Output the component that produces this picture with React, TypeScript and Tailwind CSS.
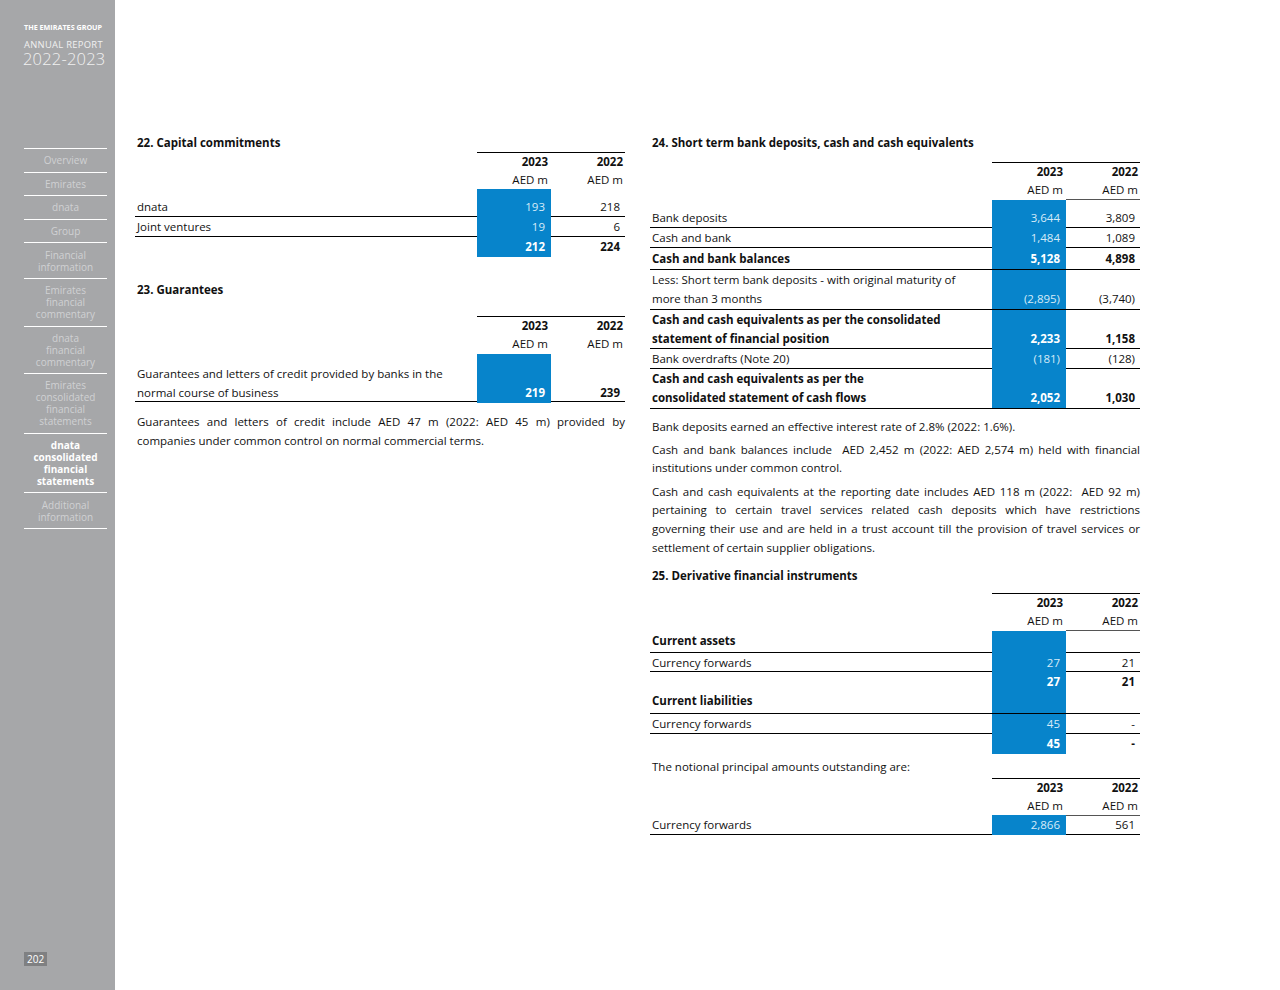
import type { ReactNode } from "react";

const BLUE = "bg-[#0784cb]";

type Row = {
  label?: ReactNode;
  a?: string;
  b?: string;
  h: number;
  bold?: boolean;
  line?: boolean;
  pb?: number;
};

function Head({ h, rule }: { h: number; rule?: boolean }) {
  return (
    <div className="grid grid-cols-[1fr_74px_74px]" style={{ height: h }}>
      <div />
      <div className="border-t border-black pr-[3px] text-right leading-[18px]">
        <div className="font-bold">2023</div>
        <div>AED m</div>
      </div>
      <div
        className={
          "border-t border-black pr-[2px] text-right leading-[18px]" +
          (rule ? " border-b border-b-[#555]" : "")
        }
      >
        <div className="font-bold">2022</div>
        <div>AED m</div>
      </div>
    </div>
  );
}

function Rows({ rows }: { rows: Row[] }) {
  return (
    <div>
      {rows.map((r, i) => {
        const pb = r.pb ?? 1;
        return (
          <div
            key={i}
            className={
              "grid grid-cols-[1fr_74px_74px] items-end leading-[19px]" +
              (r.line ? " border-b border-black" : "") +
              (r.bold ? " font-bold" : "")
            }
            style={{ height: r.h, paddingBottom: pb }}
          >
            <div className="pl-[2px]">{r.label}</div>
            <div
              className={`${BLUE} flex items-end justify-end pr-[6px] ${
                r.bold ? "text-white" : "text-[#d6ebf8]"
              }`}
              style={{ marginBottom: -pb, height: `calc(100% + ${pb}px)`, paddingBottom: pb }}
            >
              {r.a}
            </div>
            <div className="pr-[5px] text-right">{r.b}</div>
          </div>
        );
      })}
    </div>
  );
}

function Spacer({ h }: { h: number }) {
  return (
    <div className="grid grid-cols-[1fr_74px_74px]" style={{ height: h }}>
      <div />
      <div className={BLUE} />
      <div />
    </div>
  );
}

// justified paragraph broken at the same places as the printed page
function Para({ lines, className = "" }: { lines: string[]; className?: string }) {
  return (
    <div className={className}>
      {lines.map((l, i) => (
        <div key={i} className={i < lines.length - 1 ? "text-justify [text-align-last:justify]" : ""}>
          {l}
        </div>
      ))}
    </div>
  );
}

const nav: { t: string[]; active?: boolean }[] = [
  { t: ["Overview"] },
  { t: ["Emirates"] },
  { t: ["dnata"] },
  { t: ["Group"] },
  { t: ["Financial", "information"] },
  { t: ["Emirates", "financial", "commentary"] },
  { t: ["dnata", "financial", "commentary"] },
  { t: ["Emirates", "consolidated", "financial", "statements"] },
  { t: ["dnata", "consolidated", "financial", "statements"], active: true },
  { t: ["Additional", "information"] },
];

function Sidebar() {
  return (
    <aside className="relative flex h-[990px] w-[115px] shrink-0 flex-col bg-[#a6a7a9] pl-[24px] pr-[8px] text-white">
      <div className="whitespace-nowrap pt-[22px] text-[7.2px] font-bold leading-[10px]">THE EMIRATES GROUP</div>
      <div className="mt-[6.5px] whitespace-nowrap text-[9.4px] leading-[11px] tracking-[0.3px] text-[#f1f1f1]">
        ANNUAL REPORT
      </div>
      <div className="-ml-[1px] whitespace-nowrap text-[16.5px] font-light leading-[17px] tracking-[0.2px] text-[#f1f1f1]">
        2022-2023
      </div>
      <nav className="mt-[81.5px] border-t border-white">
        {nav.map((n, i) => (
          <div
            key={i}
            className={
              "border-b border-white py-[5.3px] text-center text-[10px] leading-[12px] " +
              (n.active ? "font-bold text-white" : "text-[#d0d1d3]")
            }
          >
            {n.t.map((l, j) => (
              <div key={j}>{l}</div>
            ))}
          </div>
        ))}
      </nav>
      <div className="absolute left-[24px] top-[952px] bg-[#7f8082] px-[3px] text-[10px] leading-[14px] text-white">202</div>
    </aside>
  );
}

function Title({ children, className = "" }: { children: ReactNode; className?: string }) {
  return <h2 className={"pl-[2px] font-bold leading-[18px] " + className}>{children}</h2>;
}

export default function App() {
  return (
    <div
      className="flex min-h-[990px] w-[1280px] bg-white text-[11.5px] text-[#111]"
      style={{ fontFamily: '"Open Sans", "Noto Sans", sans-serif' }}
    >
      <Sidebar />
      <main className="flex gap-[25px] pl-[20px] pt-[134px]">
        {/* left column */}
        <section className="w-[490px]">
          <Title>22. Capital commitments</Title>
          <Head h={37} />
          <Spacer h={8} />
          <Rows
            rows={[
              { label: "dnata", a: "193", b: "218", h: 20, line: true },
              { label: "Joint ventures", a: "19", b: "6", h: 20, line: true },
              { a: "212", b: "224", h: 20, bold: true },
            ]}
          />
          <Title className="mt-[24px]">23. Guarantees</Title>
          <div className="mt-[17px]">
            <Head h={38} />
            <Spacer h={10} />
            <Rows
              rows={[
                {
                  label: (
                    <span className="font-normal">
                      Guarantees and letters of credit provided by banks in the
                      <br />
                      normal course of business
                    </span>
                  ),
                  a: "219",
                  b: "239",
                  h: 38,
                  bold: true,
                  line: true,
                },
              ]}
            />
          </div>
          <Para
            className="mt-[11px] pl-[2px] leading-[18.5px]"
            lines={[
              "Guarantees and letters of credit include AED 47 m (2022: AED 45 m) provided by",
              "companies under common control on normal commercial terms.",
            ]}
          />
        </section>

        {/* right column */}
        <section className="w-[490px]">
          <Title>24. Short term bank deposits, cash and cash equivalents</Title>
          <div className="mt-[10px]">
            <Head h={38} rule />
            <Spacer h={8} />
            <Rows
              rows={[
                { label: "Bank deposits", a: "3,644", b: "3,809", h: 20, line: true },
                { label: "Cash and bank", a: "1,484", b: "1,089", h: 20, line: true },
                { label: "Cash and bank balances", a: "5,128", b: "4,898", h: 22, bold: true, line: true },
                {
                  label: (
                    <>
                      Less: Short term bank deposits - with original maturity of
                      <br />
                      more than 3 months
                    </>
                  ),
                  a: "(2,895)",
                  b: "(3,740)",
                  h: 40,
                  line: true,
                },
                {
                  label: (
                    <>
                      Cash and cash equivalents as per the consolidated
                      <br />
                      statement of financial position
                    </>
                  ),
                  a: "2,233",
                  b: "1,158",
                  h: 39,
                  bold: true,
                  line: true,
                },
                { label: "Bank overdrafts (Note 20)", a: "(181)", b: "(128)", h: 20, line: true },
                {
                  label: (
                    <>
                      Cash and cash equivalents as per the
                      <br />
                      consolidated statement of cash flows
                    </>
                  ),
                  a: "2,052",
                  b: "1,030",
                  h: 40,
                  bold: true,
                  line: true,
                },
              ]}
            />
          </div>
          <div className="pl-[2px] leading-[18.7px]">
            <p className="mt-[8.5px]">Bank deposits earned an effective interest rate of 2.8% (2022: 1.6%).</p>
            <Para
              className="mt-[4.4px]"
              lines={[
                "Cash and bank balances include\u00a0 AED 2,452 m (2022: AED 2,574 m) held with financial",
                "institutions under common control.",
              ]}
            />
            <Para
              className="mt-[4.5px]"
              lines={[
                "Cash and cash equivalents at the reporting date includes AED 118 m (2022:\u00a0 AED 92 m)",
                "pertaining to certain travel services related cash deposits which have restrictions",
                "governing their use and are held in a trust account till the provision of travel services or",
                "settlement of certain supplier obligations.",
              ]}
            />
          </div>
          <Title className="mt-[9.5px]">25. Derivative financial instruments</Title>
          <div className="mt-[8px]">
            <Head h={38} rule />
            <Rows
              rows={[
                { label: "Current assets", h: 22, bold: true, line: true, pb: 3 },
                { label: "Currency forwards", a: "27", b: "21", h: 19, line: true },
                { a: "27", b: "21", h: 19, bold: true },
                { label: "Current liabilities", h: 23, bold: true, line: true, pb: 3 },
                { label: "Currency forwards", a: "45", b: "-", h: 20, line: true },
                { a: "45", b: "-", h: 20, bold: true },
              ]}
            />
          </div>
          <p className="mt-[4px] pl-[2px] leading-[18px]">The notional principal amounts outstanding are:</p>
          <div className="mt-[2px]">
            <Head h={37} rule />
            <Rows rows={[{ label: "Currency forwards", a: "2,866", b: "561", h: 20, line: true }]} />
          </div>
        </section>
      </main>
    </div>
  );
}
